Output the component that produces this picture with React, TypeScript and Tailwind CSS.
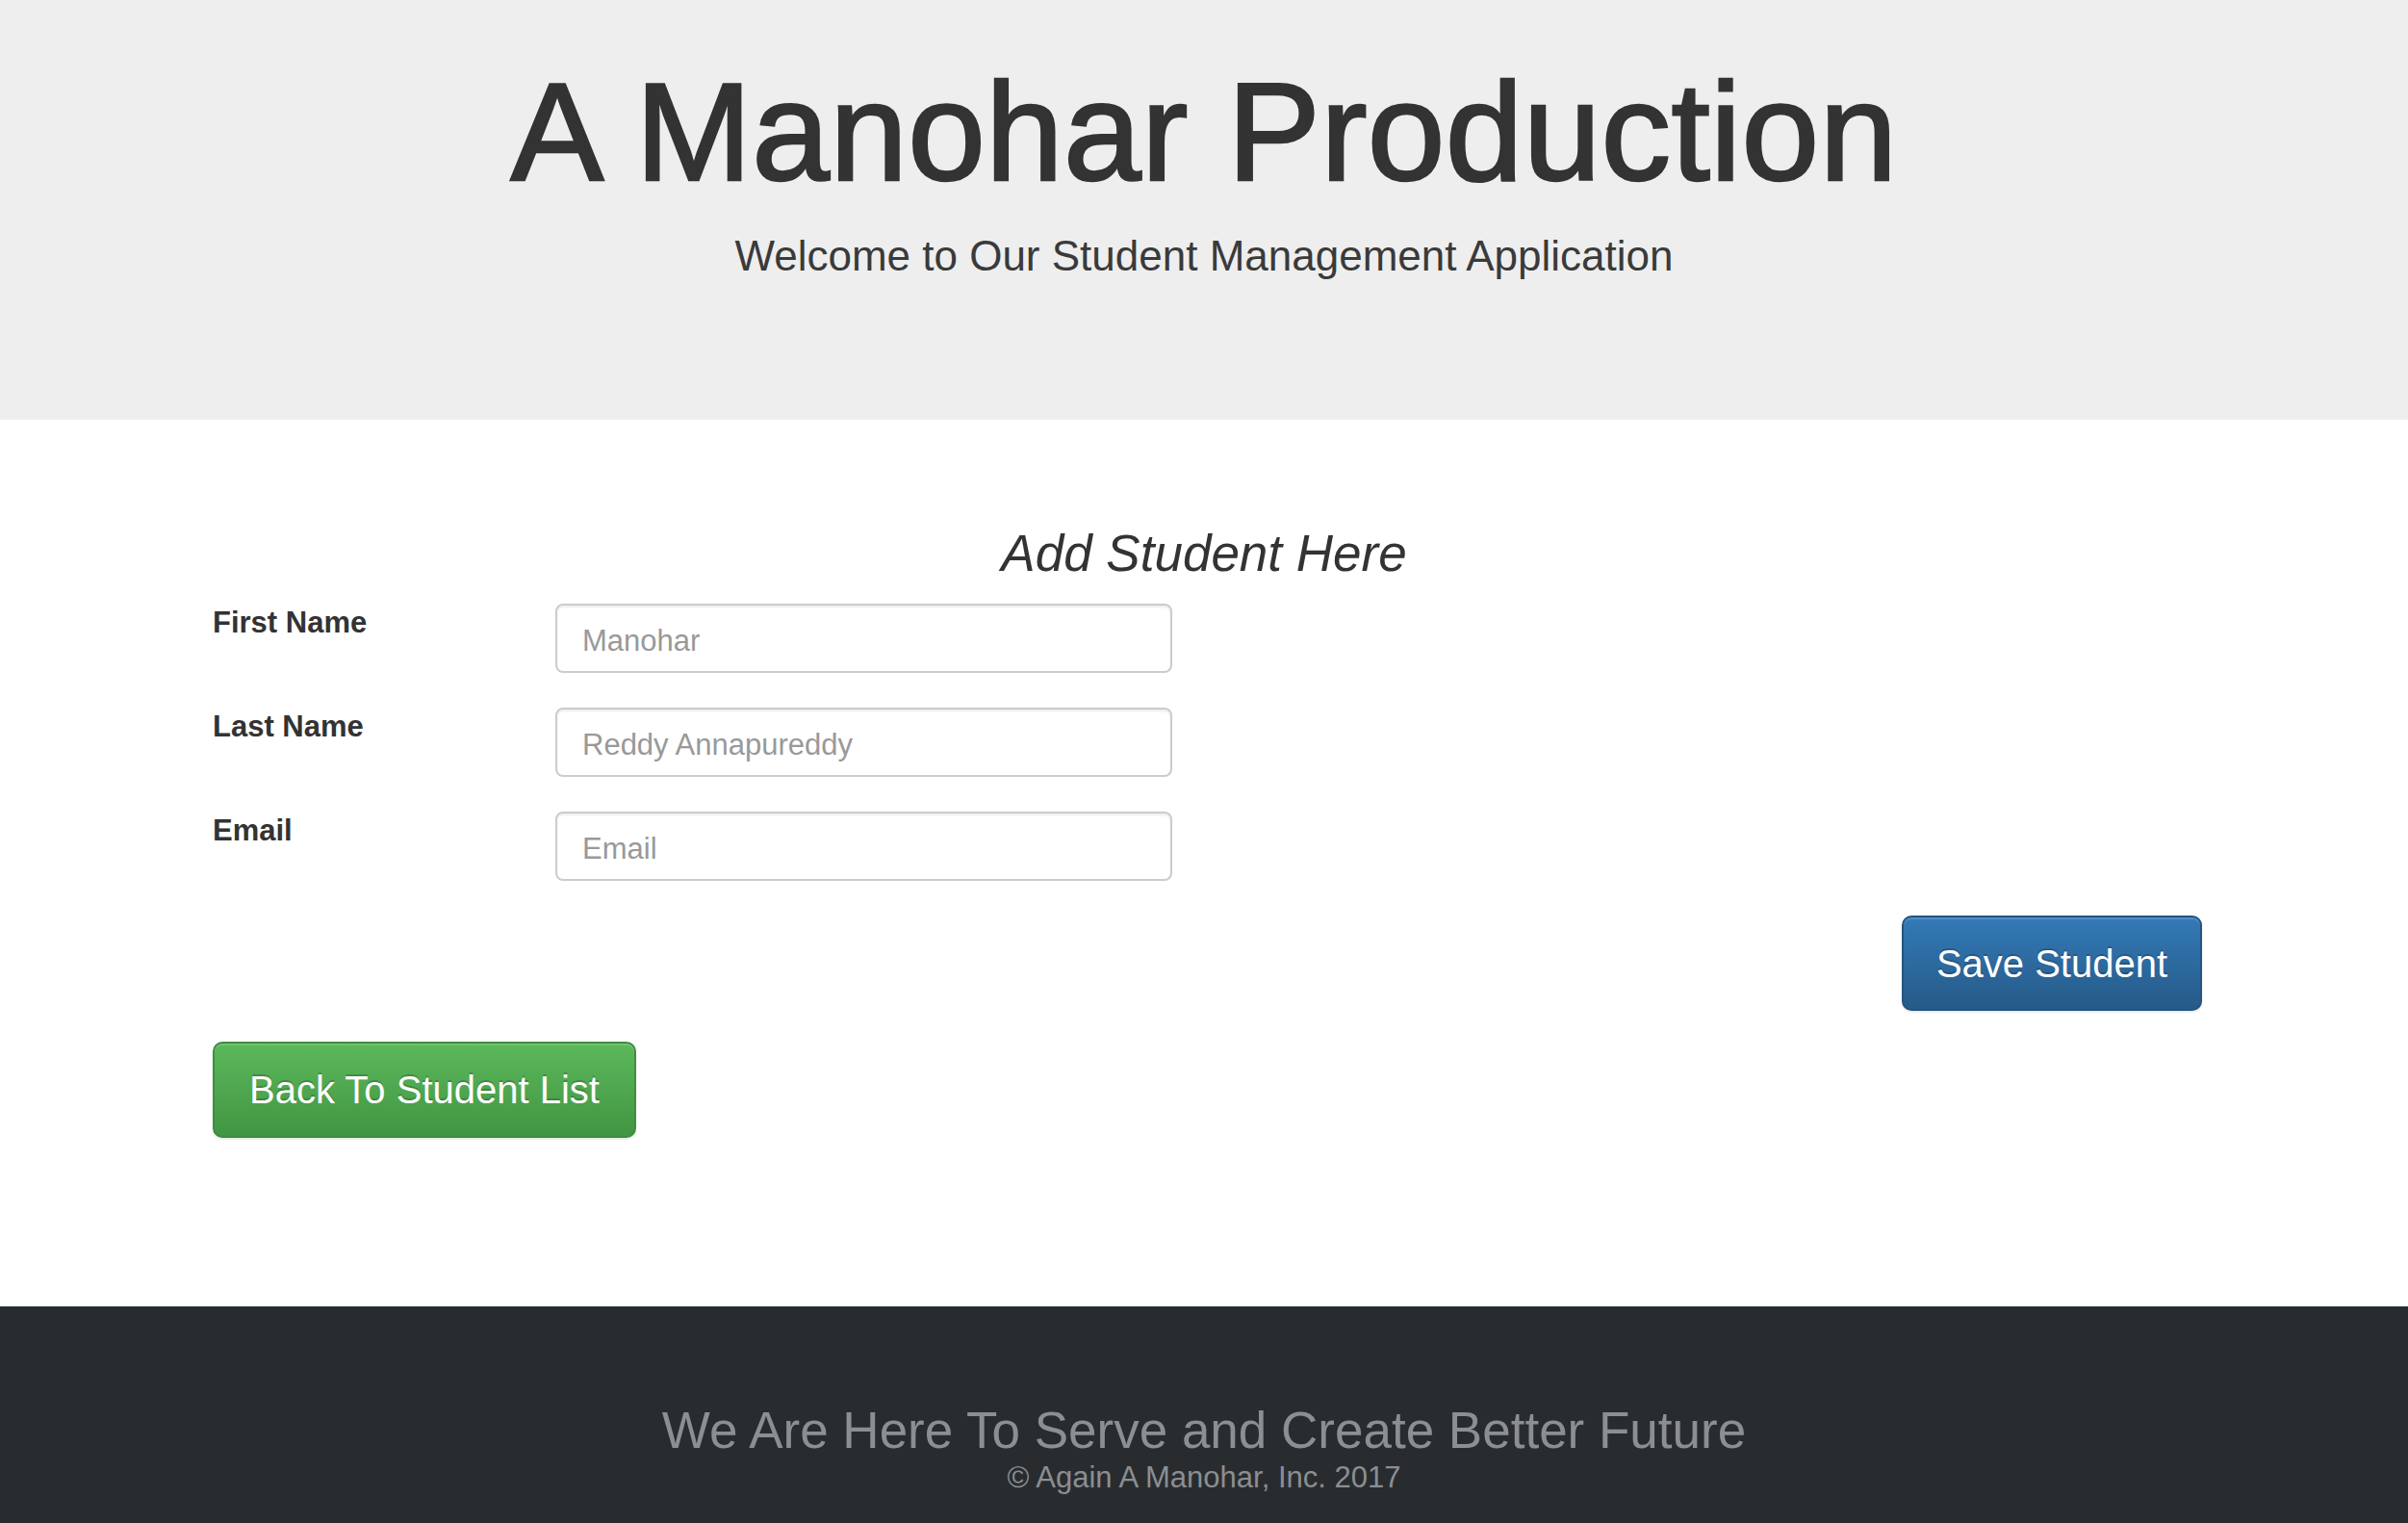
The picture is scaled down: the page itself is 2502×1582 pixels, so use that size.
import React from 'react'

const fields = [
  { label: 'First Name', placeholder: 'Manohar' },
  { label: 'Last Name', placeholder: 'Reddy Annapureddy' },
  { label: 'Email', placeholder: 'Email' }
]

function Jumbotron() {
  return (
    <header className="bg-[#eeeeee] h-[436px] pt-[67px] text-center text-[#333333]">
      <h1 className="text-[145px] leading-[140px] tracking-[0.3px] [-webkit-text-stroke:2.5px_#333333]">
        A Manohar Production
      </h1>
      <p className="mt-[37px] text-[44px] leading-[44px] text-[#3a3a3a]">
        Welcome to Our Student Management Application
      </p>
    </header>
  )
}

function StudentForm() {
  return (
    <main className="pt-[113px] pb-[175px] pl-[221px] pr-[214px] text-[#333333]">
      <h3 className="text-center italic text-[53px] leading-[52px] ml-[-221px] mr-[-214px]">
        Add Student Here
      </h3>
      <form className="mt-[26px] flex flex-col gap-[36px]">
        {fields.map((f) => (
          <div key={f.label} className="flex items-start">
            <label className="w-[356px] pt-[5px] text-[31px] leading-[30px] font-bold">
              {f.label}
            </label>
            <input
              type="text"
              placeholder={f.placeholder}
              className="w-[641px] h-[72px] px-[26px] pt-[6px] text-[31px] border-2 border-[#cccccc] rounded-[8px] shadow-[inset_0_2px_2px_rgba(0,0,0,0.075)] placeholder:text-[#999999] outline-none"
            />
          </div>
        ))}
      </form>
      <div className="mt-[36px] flex justify-end">
        <button className="w-[312px] h-[99px] text-[40px] text-white rounded-[10px] border-2 border-[#245580] bg-linear-to-b from-[#337ab7] to-[#265a88] shadow-[inset_0_2px_0_rgba(255,255,255,0.15),0_2px_2px_rgba(0,0,0,0.075)] [text-shadow:0_-2px_0_rgba(0,0,0,0.2)]">
          Save Student
        </button>
      </div>
      <div className="mt-[32px] flex">
        <button className="w-[440px] h-[100px] text-[40px] text-white rounded-[10px] border-2 border-[#3e8f3e] bg-linear-to-b from-[#5cb85c] to-[#419641] shadow-[inset_0_2px_0_rgba(255,255,255,0.15),0_2px_2px_rgba(0,0,0,0.075)] [text-shadow:0_-2px_0_rgba(0,0,0,0.2)]">
          Back To Student List
        </button>
      </div>
    </main>
  )
}

function Footer() {
  return (
    <footer className="bg-[#292c2f] h-[225px] pt-[103px] text-center text-[#8b8e92]">
      <p className="text-[53px] leading-[52px]">We Are Here To Serve and Create Better Future</p>
      <p className="mt-[8px] text-[31px] leading-[30px]">© Again A Manohar, Inc. 2017</p>
    </footer>
  )
}

export default function App() {
  return (
    <div className="w-[2502px] h-[1582px] overflow-hidden bg-white font-['Liberation_Sans',Arial,sans-serif]">
      <Jumbotron />
      <StudentForm />
      <Footer />
    </div>
  )
}
